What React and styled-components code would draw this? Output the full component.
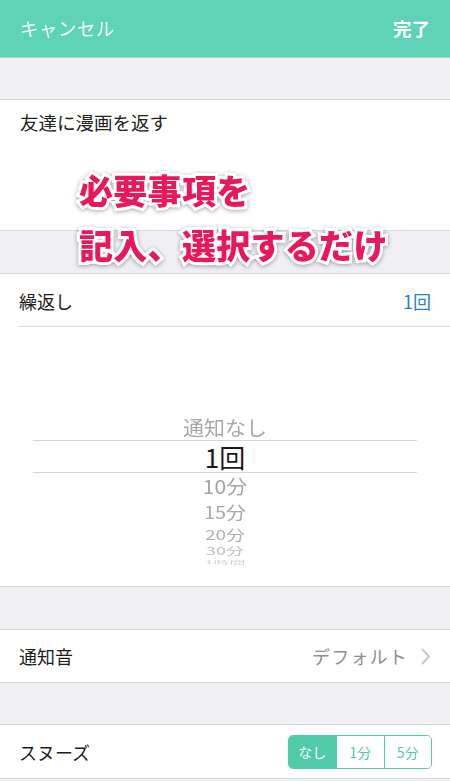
import React from "react";
import styled, { createGlobalStyle } from "styled-components";

const Global = createGlobalStyle`
  html, body { margin: 0; padding: 0; background: #efeff4; }
  body { font-family: "Noto Sans CJK JP", "Noto Sans", sans-serif; -webkit-font-smoothing: antialiased; }
  * { box-sizing: border-box; }
`;

const Page = styled.div`
  position: relative;
  width: 450px;
  min-height: 781px;
  background: #efeff4;
  overflow: hidden;
`;

const NavBar = styled.div`
  height: 58px;
  background: #5fd3b7;
  border-bottom: 1px solid #9fd9ca;
  display: flex;
  align-items: center;
  justify-content: space-between;
  padding: 0 20px 2px 20px;
  color: #fff;
`;

const NavButton = styled.span`
  font-size: 18.5px;
  font-weight: ${(p) => (p.$bold ? 700 : 400)};
  letter-spacing: ${(p) => (p.$bold ? "0" : "0.5px")};
  opacity: ${(p) => (p.$bold ? 1 : 0.95)};
`;

const Gap = styled.div`
  height: ${(p) => p.$h}px;
`;

const Section = styled.div`
  background: #fff;
  border-top: 1px solid #d9d9de;
  border-bottom: 1px solid #d9d9de;
`;

const TitleField = styled.div`
  height: 130px;
  padding: 8px 20px 0;
  font-size: 18.5px;
  color: #222;
  line-height: 28px;
`;

const Row = styled.div`
  height: ${(p) => p.$h || 53}px;
  display: flex;
  align-items: center;
  justify-content: space-between;
  padding: 0 19px 0 19px;
  font-size: 18px;
  color: #1c1c1c;
  position: relative;
  ${(p) =>
    p.$divider &&
    `
    &::after {
      content: "";
      position: absolute;
      left: 18px; right: 0; bottom: 0;
      height: 1px;
      background: #dcdce0;
    }
  `}
`;

const Value = styled.span`
  display: flex;
  align-items: center;
  gap: 13px;
  color: ${(p) => p.$color};
  font-size: 18px;
  letter-spacing: ${(p) => p.$ls || 0}px;
`;

const Picker = styled.div`
  height: 259px;
  padding-top: 89px;
  display: flex;
  flex-direction: column;
  align-items: center;
`;

const PickerItem = styled.div`
  height: ${(p) => p.$h}px;
  width: 100%;
  display: flex;
  align-items: center;
  justify-content: center;
  font-size: ${(p) => p.$size}px;
  color: ${(p) => p.$color};
  transform: scaleY(${(p) => p.$sy});
  line-height: 1;
  overflow: visible;
  white-space: nowrap;
`;

const PickerLabel = styled.span`
  display: block;
  line-height: ${(p) => p.$lh}px;
  height: ${(p) => p.$lh}px;
  margin-top: ${(p) => p.$mt || 0}px;
`;

const PickerSelected = styled.div`
  width: 384px;
  height: 33px;
  border-top: 1px solid #d6d6da;
  border-bottom: 1px solid #d6d6da;
  display: flex;
  align-items: center;
  justify-content: center;
  font-size: 26px;
  color: #1a1a1a;
  line-height: 1;
`;

const Segmented = styled.div`
  display: flex;
  height: 34px;
  margin-right: -1px;
  border: 1px solid #4fcba9;
  border-radius: 5px;
  overflow: hidden;
`;

const Segment = styled.div`
  width: 47.5px;
  display: flex;
  align-items: center;
  justify-content: center;
  font-size: 14px;
  color: ${(p) => (p.$active ? "#fff" : "#4fcba9")};
  background: ${(p) => (p.$active ? "#4fcba9" : "#fff")};
  & + & { border-left: 1px solid #4fcba9; }
`;

const Overlay = styled.div`
  position: absolute;
  left: 79px;
  top: 162px;
  font-size: 34px;
  line-height: 55px;
  font-weight: 900;
  color: #e8185a;
  -webkit-text-stroke: 6px #fff;
  paint-order: stroke fill;
  filter: drop-shadow(0 1px 2px rgba(0, 0, 0, 0.35));
  white-space: nowrap;
  letter-spacing: 0.3px;
`;

const Chevron = () => (
  <svg width="10" height="17" viewBox="0 0 10 17" fill="none">
    <path d="M1.5 1.5 L8 8.5 L1.5 15.5" stroke="#c7c7cc" strokeWidth="2" strokeLinecap="round" strokeLinejoin="round" />
  </svg>
);

export default function App() {
  return (
    <>
      <Global />
      <Page>
        <NavBar>
          <NavButton>キャンセル</NavButton>
          <NavButton $bold>完了</NavButton>
        </NavBar>
        <Gap $h={41} />
        <Section>
          <TitleField>友達に漫画を返す</TitleField>
        </Section>
        <Gap $h={42} />
        <Section>
          <Row $divider>
            繰返し
            <Value $color="#2a82d0">1回</Value>
          </Row>
          <Picker>
            <PickerItem $h={24} $size={21} $color="#a9a9a9" $sy={0.95}>
              <PickerLabel $lh={20} $mt={-3}>通知なし</PickerLabel>
            </PickerItem>
            <PickerSelected>1回</PickerSelected>
            <PickerItem $h={27} $size={21} $color="#a6a6a6" $sy={0.92}>10分</PickerItem>
            <PickerItem $h={24} $size={20} $color="#a9a9a9" $sy={0.85}>15分</PickerItem>
            <PickerItem $h={20} $size={19} $color="#b0b0b0" $sy={0.72}>20分</PickerItem>
            <PickerItem $h={13} $size={18} $color="#bdbdbd" $sy={0.55}>30分</PickerItem>
            <PickerItem $h={9} $size={16} $color="#d4d4d4" $sy={0.3}>1時間</PickerItem>
          </Picker>
        </Section>
        <Gap $h={42} />
        <Section>
          <Row $h={52}>
            通知音
            <Value $color="#8e8e93" $ls={1.2}>
              デフォルト
              <Chevron />
            </Value>
          </Row>
        </Section>
        <Gap $h={41} />
        <Section>
          <Row>
            スヌーズ
            <Segmented>
              <Segment $active>なし</Segment>
              <Segment>1分</Segment>
              <Segment>5分</Segment>
            </Segmented>
          </Row>
        </Section>
        <Overlay>
          必要事項を
          <br />
          記入、選択するだけ
        </Overlay>
      </Page>
    </>
  );
}
